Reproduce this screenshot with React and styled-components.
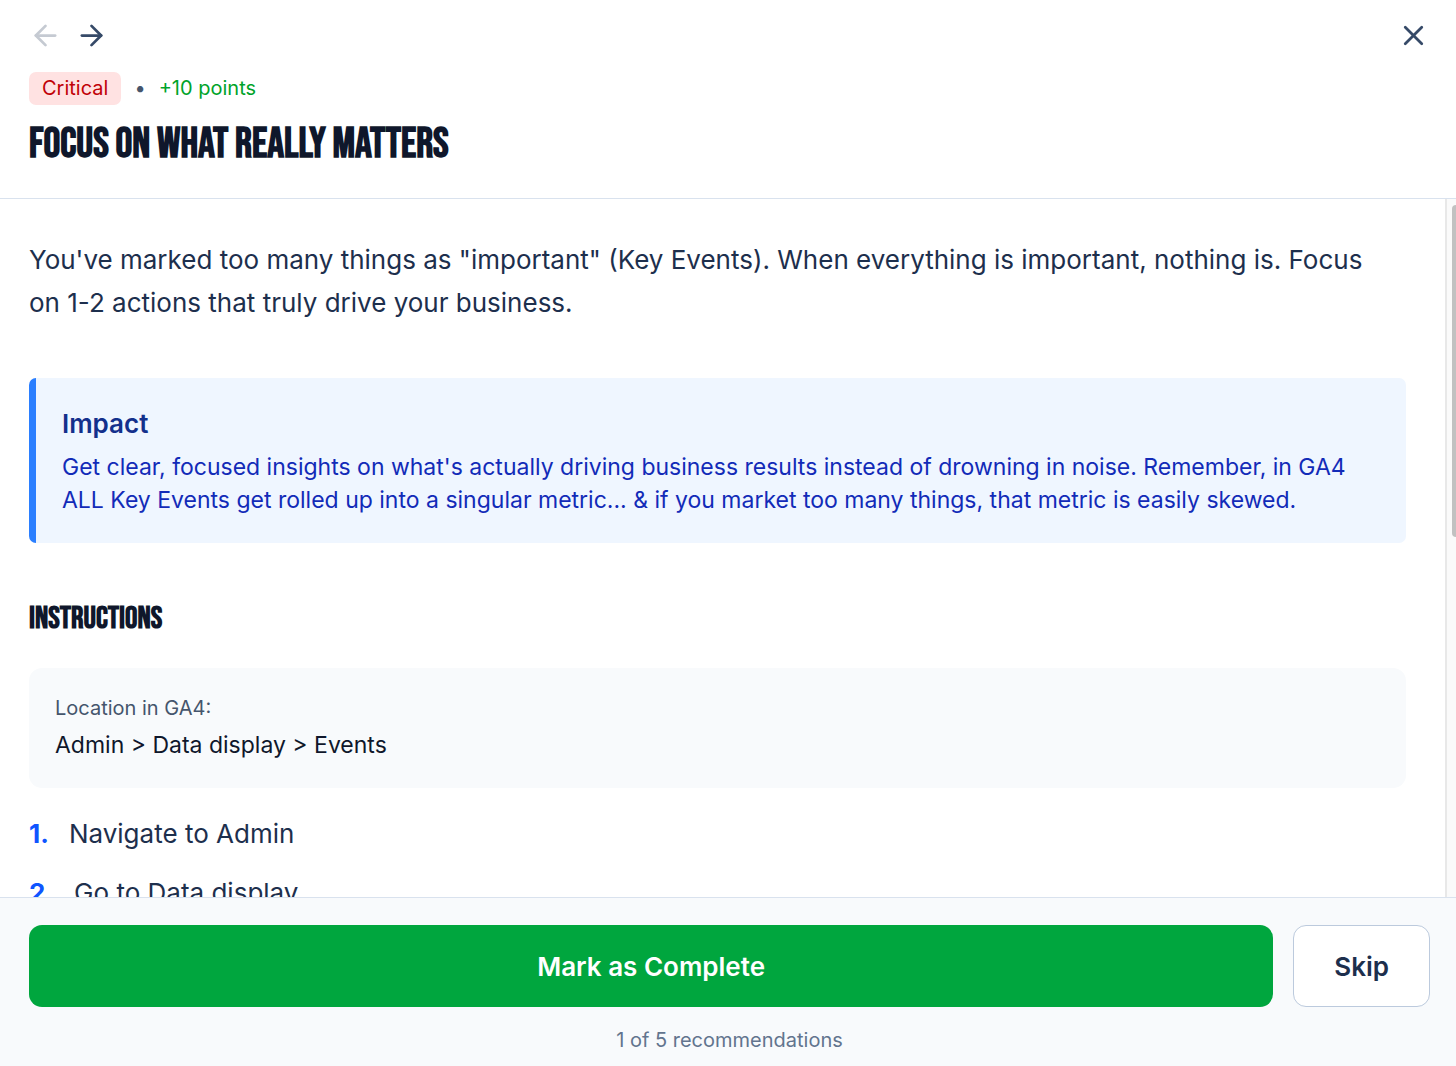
import styled, { createGlobalStyle } from "styled-components";
import { ArrowLeft, ArrowRight, X } from "lucide-react";

const steps = ["Navigate to Admin", "Go to Data display"];

const App = () => {
  return (
    <Panel>
      <GlobalStyle />
      <Header>
        <TopBar>
          <Nav aria-label="Recommendations">
            <IconButton aria-label="Previous recommendation" disabled>
              <ArrowLeft size={33} />
            </IconButton>
            <IconButton aria-label="Next recommendation">
              <ArrowRight size={33} />
            </IconButton>
          </Nav>
          <IconButton aria-label="Close">
            <X size={33} />
          </IconButton>
        </TopBar>
        <Meta>
          <Badge>Critical</Badge>
          <span>•</span>
          <Points>+10 points</Points>
        </Meta>
        <Title>Focus on what really matters</Title>
      </Header>

      <Body>
        <Content>
          <Description>
            You've marked too many things as "important" (Key Events). When
            everything is important, nothing is. Focus on 1-2 actions that truly
            drive your business.
          </Description>

          <Impact>
            <ImpactTitle>Impact</ImpactTitle>
            <ImpactText>
              Get clear, focused insights on what's actually driving business
              results instead of drowning in noise. Remember, in GA4 ALL Key
              Events get rolled up into a singular metric... &amp; if you market
              too many things, that metric is easily skewed.
            </ImpactText>
          </Impact>

          <SectionTitle>Instructions</SectionTitle>
          <Location>
            <LocationLabel>Location in GA4:</LocationLabel>
            <LocationPath>Admin &gt; Data display &gt; Events</LocationPath>
          </Location>

          <Steps>
            {steps.map((step, index) => (
              <Step key={step}>
                <StepNumber>{index + 1}.</StepNumber>
                <span>{step}</span>
              </Step>
            ))}
          </Steps>
        </Content>
        <ScrollTrack aria-hidden="true">
          <ScrollThumb />
        </ScrollTrack>
      </Body>

      <Footer>
        <Actions>
          <CompleteButton>Mark as Complete</CompleteButton>
          <SkipButton>Skip</SkipButton>
        </Actions>
        <Progress>1 of 5 recommendations</Progress>
      </Footer>
    </Panel>
  );
};

export default App;

const GlobalStyle = createGlobalStyle`
  * {
    box-sizing: border-box;
  }

  body {
    margin: 0;
    font-family: "Inter", "Liberation Sans", sans-serif;
    font-optical-sizing: none;
    background: #ffffff;
  }

  h2, h3, h4, p, ol {
    margin: 0;
    padding: 0;
  }

  button {
    font-family: inherit;
    cursor: pointer;
  }
`;

const Panel = styled.div`
  display: flex;
  flex-direction: column;
  height: 100vh;
  color: #1d2f4d;
`;

const Header = styled.header`
  flex-shrink: 0;
  padding: 19px 26px 26px 29px;
  border-bottom: 1px solid #d9e2ee;
`;

const TopBar = styled.div`
  display: flex;
  justify-content: space-between;
  align-items: center;
`;

const Nav = styled.nav`
  display: flex;
  gap: 13px;
`;

const IconButton = styled.button`
  display: flex;
  padding: 0;
  border: none;
  background: none;
  color: #364a68;

  &:disabled {
    color: #c5cad2;
    cursor: default;
  }
`;

const Meta = styled.div`
  display: flex;
  align-items: center;
  gap: 13px;
  margin-top: 20px;
  font-size: 20px;
  line-height: 33px;
  color: #45556c;
`;

const Badge = styled.span`
  padding: 0 13px;
  border-radius: 7px;
  background: #ffe2e2;
  color: #c10007;
`;

const Points = styled.span`
  color: #00a32a;
`;

const Title = styled.h2`
  margin-top: 13px;
  font-family: "Bebas Neue", "Liberation Sans Narrow", "Liberation Sans", sans-serif;
  font-size: 42px;
  font-weight: 700;
  line-height: 54px;
  text-transform: uppercase;
  color: #0f172b;
`;

const Body = styled.main`
  display: flex;
  flex: 1;
  min-height: 0;
`;

const Content = styled.div`
  flex: 1;
  min-width: 0;
  padding: 39px 39px 40px 29px;
  overflow-y: auto;
  scrollbar-width: none;
`;

const Description = styled.p`
  padding-right: 20px;
  font-size: 26px;
  line-height: 43px;
`;

const Impact = styled.section`
  margin-top: 54px;
  padding: 26px;
  border-left: 7px solid #2b7fff;
  border-radius: 7px;
  background: #eff6ff;
`;

const ImpactTitle = styled.h4`
  font-size: 26px;
  font-weight: 600;
  line-height: 40px;
  color: #13308c;
`;

const ImpactText = styled.p`
  margin-top: 7px;
  font-size: 23px;
  line-height: 33px;
  color: #122bb8;
`;

const SectionTitle = styled.h3`
  margin-top: 54px;
  font-family: "Bebas Neue", "Liberation Sans Narrow", "Liberation Sans", sans-serif;
  font-size: 31px;
  font-weight: 700;
  line-height: 43px;
  text-transform: uppercase;
  color: #0f172b;
`;

const Location = styled.div`
  margin-top: 28px;
  padding: 26px;
  border-radius: 13px;
  background: #f8fafc;
`;

const LocationLabel = styled.p`
  font-size: 20px;
  line-height: 28px;
  color: #45556c;
`;

const LocationPath = styled.p`
  margin-top: 7px;
  font-size: 23px;
  line-height: 33px;
  color: #0f172b;
`;

const Steps = styled.ol`
  display: flex;
  flex-direction: column;
  gap: 16px;
  margin-top: 24px;
  list-style: none;
`;

const Step = styled.li`
  display: flex;
  gap: 20px;
  font-size: 26px;
  line-height: 43px;
`;

const StepNumber = styled.span`
  font-weight: 700;
  color: #0f55ff;
`;

const ScrollTrack = styled.div`
  width: 11px;
  padding: 6px 0 0 5px;
  border-left: 2px solid #e8e8e8;
  background: #fafafa;
`;

const ScrollThumb = styled.div`
  height: 48%;
  border-radius: 6px 0 0 6px;
  background: #c1c1c1;
`;

const Footer = styled.footer`
  flex-shrink: 0;
  padding: 27px 26px 12px 29px;
  border-top: 1px solid #d9e2ee;
  background: #f8fafc;
`;

const Actions = styled.div`
  display: flex;
  gap: 20px;
`;

const Button = styled.button`
  height: 82px;
  border-radius: 13px;
  font-size: 26px;
  font-weight: 600;
`;

const CompleteButton = styled(Button)`
  flex: 1;
  border: none;
  background: #00a63e;
  color: #ffffff;
`;

const SkipButton = styled(Button)`
  padding: 0 40px;
  border: 1px solid #bccadd;
  background: #ffffff;
  color: #1d2f4d;
`;

const Progress = styled.p`
  margin-top: 20px;
  font-size: 20px;
  line-height: 27px;
  text-align: center;
  color: #62748e;
`;
